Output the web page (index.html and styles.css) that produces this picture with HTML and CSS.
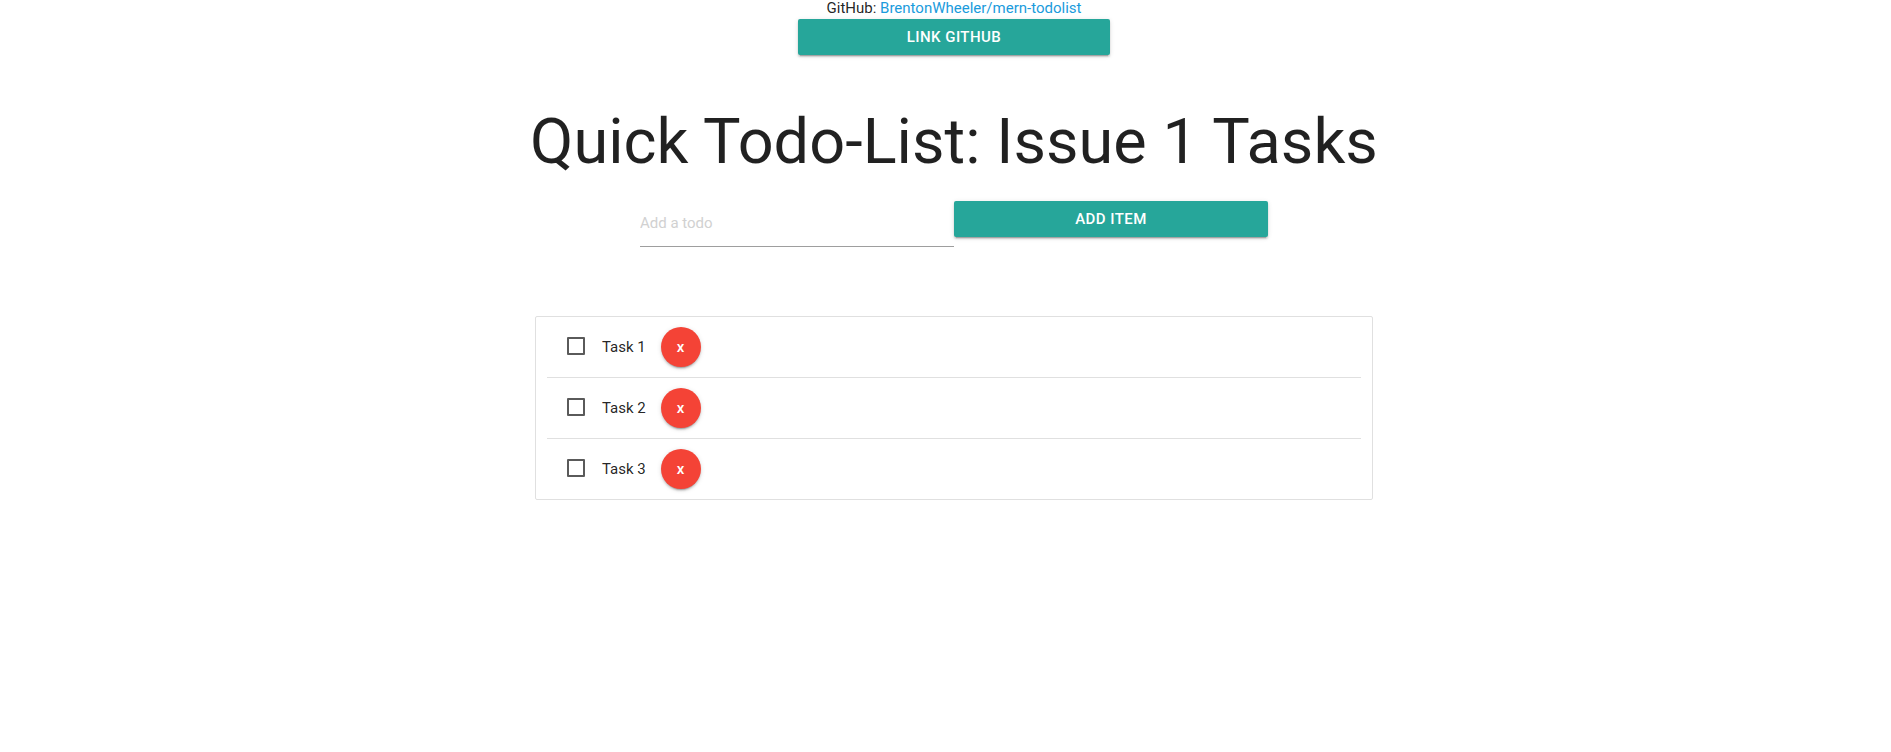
FILE: index.html
```html
<!DOCTYPE html>
<html lang="en">
<head>
<meta charset="utf-8">
<title>Todo List</title>
<link rel="stylesheet" href="styles.css">
</head>
<body>
<header class="github">
<div class="repo">GitHub: <a class="repo-link" href="#">BrentonWheeler/mern-todolist</a></div>
<button class="btn btn-link">Link GitHub</button>
</header>
<h1 class="title">Quick Todo-List: Issue 1 Tasks</h1>
<form class="add-form">
<input class="add-input" type="text" placeholder="Add a todo">
<button class="btn btn-add" type="button">Add Item</button>
</form>
<ul class="list">
<li class="item"><label class="task"><input class="check" type="checkbox"><span class="name">Task 1</span></label><button class="remove">x</button></li>
<li class="item"><label class="task"><input class="check" type="checkbox"><span class="name">Task 2</span></label><button class="remove">x</button></li>
<li class="item"><label class="task"><input class="check" type="checkbox"><span class="name">Task 3</span></label><button class="remove">x</button></li>
</ul>
</body>
</html>
```
FILE: styles.css
```css
* { box-sizing: border-box; }
body {
  margin: 0;
  display: flex;
  flex-direction: column;
  align-items: center;
  padding-left: 17px;
  width: 1891px;
  background: #fff;
  color: rgba(0, 0, 0, 0.87);
  font: 15px/19px Roboto, sans-serif;
}
button, input { font-family: inherit; }
.github {
  display: flex;
  flex-direction: column;
  align-items: center;
  width: 312px;
}
.repo { height: 19px; line-height: 16px; }
.repo-link { color: #1a9bdc; text-decoration: none; }
.btn {
  height: 36px;
  padding: 0;
  border: 0;
  border-radius: 2px;
  background: #26a69a;
  color: #fff;
  font-size: 15px;
  font-weight: 500;
  line-height: 36px;
  letter-spacing: 0.45px;
  text-transform: uppercase;
  box-shadow: 0 2px 2px 0 rgba(0, 0, 0, 0.14), 0 1px 5px 0 rgba(0, 0, 0, 0.12), 0 3px 1px -2px rgba(0, 0, 0, 0.2);
}
.btn-link { width: 312px; }
.btn-add { width: 314px; }
.title {
  margin: 52px 0 25px;
  font-size: 63px;
  font-weight: 400;
  line-height: 69px;
  letter-spacing: 0.05px;
  white-space: nowrap;
}
.add-form { display: flex; align-items: flex-start; height: 115px; }
.add-input {
  width: 314px;
  height: 46px;
  padding: 0 0 2px;
  border: 0;
  border-bottom: 1px solid #9e9e9e;
  background: transparent;
  font-size: 15px;
  outline: 0;
}
.add-input::placeholder { color: #d1d1d1; opacity: 1; }
.list {
  width: 838px;
  height: 184px;
  margin: 0;
  padding: 0 11px;
  border: 1px solid #e0e0e0;
  border-radius: 2px;
  list-style: none;
}
.item {
  display: flex;
  align-items: center;
  height: 61px;
  padding-left: 20px;
  border-bottom: 1px solid #e0e0e0;
}
.item:last-child { height: 60px; border-bottom: 0; }
.task { display: flex; align-items: center; width: 94px; }
.check {
  appearance: none;
  flex: none;
  width: 18px;
  height: 18px;
  margin: 0 17px 2px 0;
  border: 2px solid #5a5a5a;
  border-radius: 1px;
}
.name { white-space: nowrap; }
.remove {
  width: 40px;
  height: 40px;
  padding: 0 1px 0 0;
  border: 0;
  border-radius: 50%;
  background: #f44336;
  color: #fff;
  font-size: 15px;
  font-weight: 500;
  line-height: 40px;
  box-shadow: 0 2px 2px 0 rgba(0, 0, 0, 0.14), 0 1px 5px 0 rgba(0, 0, 0, 0.12), 0 3px 1px -2px rgba(0, 0, 0, 0.2);
}
```
